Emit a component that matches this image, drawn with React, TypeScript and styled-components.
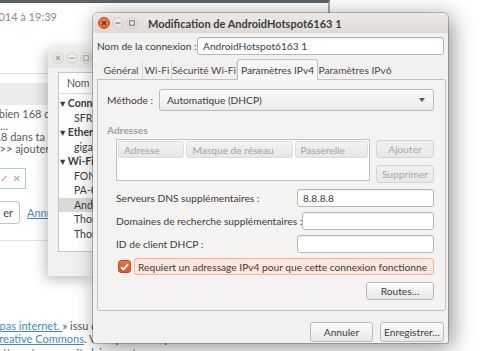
import React from 'react';
import styled, { createGlobalStyle, css } from 'styled-components';

const GlobalStyle = createGlobalStyle`
  html, body {
    margin: 0;
    padding: 0;
  }
  body {
    width: 500px;
    height: 351px;
    overflow: hidden;
    background: #ffffff;
    font-family: Lato, "Open Sans", "DejaVu Sans", sans-serif;
    color: #3c3c3c;
  }
`;

const Desktop = styled.div`
  position: relative;
  width: 500px;
  height: 351px;
  overflow: hidden;
  background: #ffffff;
`;

/* ---------- web page behind the windows ---------- */

const PageColumn = styled.div`
  display: flex;
  flex-direction: column;
  width: 520px;
  margin-left: -8px;
  font-size: 11px;
  color: #555;
`;

const CommentBox = styled.div`
  width: 338px;
  height: 60px;
  border-top: 3px solid #5b6569;
  border-right: 2px solid #a3abae;
  padding: 7px 0 0 0;
  box-sizing: border-box;
  display: flex;
  flex-direction: column;
  gap: 3px;
`;

const Meta = styled.span`
  color: #8a8a8a;
  line-height: 14px;
`;

const Rule = styled.div<{ $top: number; $w: number; $color?: string }>`
  margin-top: ${({ $top }) => $top}px;
  height: 1px;
  width: ${({ $w }) => $w}px;
  background: ${({ $color }) => $color || '#dddddd'};
`;

const Band = styled.div`
  margin-top: 9px;
  height: 22px;
  width: 70px;
  background: #ececec;
`;

const Lines = styled.div`
  margin-top: 3px;
  display: flex;
  flex-direction: column;
  line-height: 11.7px;
  color: #5a5a5a;
`;

const EditBox = styled.div`
  margin-top: 13px;
  width: 34px;
  height: 21px;
  box-sizing: border-box;
  border: 1px solid #a8d0e2;
  display: flex;
  align-items: center;
  justify-content: flex-end;
  gap: 4px;
  padding-right: 4px;
  color: #a5a5a5;
  font-size: 10px;
`;

const ActionRow = styled.div`
  margin-top: 12px;
  display: flex;
  align-items: center;
  gap: 7px;
`;

const GhostButton = styled.div`
  width: 28px;
  height: 23px;
  box-sizing: border-box;
  border: 1px solid #c5c5c5;
  border-left: none;
  border-radius: 0 4px 4px 0;
  display: flex;
  align-items: center;
  justify-content: flex-end;
  padding-right: 6px;
  color: #444;
`;

const PageLink = styled.span`
  color: #3d8dc4;
  text-decoration: underline;
`;

const Footnote = styled.div`
  margin-top: 78px;
  display: flex;
  flex-direction: column;
  line-height: 13.5px;
  color: #555;
  white-space: nowrap;
`;

/* ---------- generic window bits ---------- */

const WinButton = styled.div<{ $kind: 'close' | 'plain' }>`
  width: 12px;
  height: 12px;
  border-radius: 50%;
  display: flex;
  align-items: center;
  justify-content: center;
  flex: none;
  box-sizing: border-box;
  ${({ $kind }) =>
    $kind === 'close'
      ? css`
          background: radial-gradient(circle at 50% 35%, #f7916a, #e0531f);
          border: 1px solid #c9461a;
        `
      : css`
          background: radial-gradient(circle at 50% 35%, #f2f0ee, #dcd9d5);
          border: 1px solid #d0ccc7;
        `}
`;

const Glyph = ({ kind, color }: { kind: 'close' | 'min' | 'max'; color: string }) => (
  <svg width="6" height="6" viewBox="0 0 6 6">
    {kind === 'close' && (
      <path d="M1 1 L5 5 M5 1 L1 5" stroke={color} strokeWidth="1.2" />
    )}
    {kind === 'min' && <path d="M0.5 3 H5.5" stroke={color} strokeWidth="1.2" />}
    {kind === 'max' && (
      <rect x="0.7" y="0.7" width="4.6" height="4.6" fill="none" stroke={color} strokeWidth="1" />
    )}
  </svg>
);

/* ---------- connections window (behind, only its left edge shows) ---------- */

const ConnWindow = styled.div`
  position: absolute;
  left: 48px;
  top: 48px;
  width: 46px;
  height: 228px;
  background: #f2f1f0;
  border-radius: 4px 0 0 0;
  box-shadow: -2px 3px 14px rgba(0, 0, 0, 0.28);
  display: flex;
  flex-direction: column;
  overflow: hidden;
`;

const SmallTitle = styled.div`
  height: 20px;
  flex: none;
  display: flex;
  align-items: center;
  gap: 2px;
  padding-left: 4px;
  background: linear-gradient(#efece9, #e3e0dc);
  opacity: 0.75;
`;

const ListBox = styled.div`
  margin: 4px 0 0 10px;
  height: 178px;
  background: #ffffff;
  border: 1px solid #c9c7c4;
  border-right: none;
  display: flex;
  flex-direction: column;
  font-size: 10.5px;
  overflow: hidden;
`;

const ListHead = styled.div`
  height: 20px;
  flex: none;
  padding-left: 8px;
  display: flex;
  align-items: center;
  border-bottom: 1px solid #dedcda;
  color: #555;
  margin-bottom: 2px;
`;

const ListRow = styled.div<{ $group?: boolean; $selected?: boolean }>`
  height: 14.5px;
  flex: none;
  display: flex;
  align-items: center;
  padding-left: ${({ $group }) => ($group ? 1 : 15)}px;
  font-weight: ${({ $group }) => ($group ? 700 : 400)};
  background: ${({ $selected }) => ($selected ? '#dcdad7' : 'transparent')};
  color: #3c3c3c;
  white-space: nowrap;
  overflow: hidden;
`;

/* ---------- main dialog ---------- */

const Dialog = styled.div`
  position: absolute;
  left: 93px;
  top: 13px;
  width: 355px;
  height: 330px;
  background: #f2f1f0;
  border-radius: 5px 5px 2px 2px;
  box-shadow: 0 0 0 1px rgba(0, 0, 0, 0.22), 4px 4px 22px rgba(0, 0, 0, 0.45);
  display: flex;
  flex-direction: column;
  font-size: 10.2px;
`;

const TitleBar = styled.div`
  height: 20px;
  flex: none;
  display: flex;
  align-items: center;
  gap: 2px;
  padding-left: 5px;
  background: linear-gradient(#ece9e5, #dedad5);
  border-radius: 5px 5px 0 0;
`;

const TitleText = styled.span`
  margin-left: 8px;
  font-size: 11px;
  font-weight: 700;
  color: #3c3c3c;
  white-space: nowrap;
`;

const Body = styled.div`
  display: flex;
  flex-direction: column;
  padding: 4px 2px 0 4px;
`;

const Row = styled.div`
  display: flex;
  align-items: center;
`;

const Label = styled.span<{ $w?: number }>`
  width: ${({ $w }) => ($w ? `${$w}px` : 'auto')};
  flex: none;
  white-space: nowrap;
  color: #3c3c3c;
`;

const TextInput = styled.div<{ $w: number; $h?: number }>`
  width: ${({ $w }) => $w}px;
  height: ${({ $h }) => $h || 18}px;
  box-sizing: border-box;
  background: #ffffff;
  border: 1px solid #b9b7b4;
  border-radius: 3px;
  box-shadow: inset 0 1px 1px rgba(0, 0, 0, 0.06);
  display: flex;
  align-items: center;
  padding-left: 5px;
  color: #3c3c3c;
  white-space: nowrap;
`;

const Tabs = styled.div`
  margin: 3px 0 0 3px;
  height: 21px;
  display: flex;
  align-items: flex-end;
`;

const Tab = styled.div<{ $w: number; $active?: boolean; $last?: boolean }>`
  width: ${({ $w }) => $w}px;
  height: 18px;
  box-sizing: border-box;
  display: flex;
  align-items: center;
  justify-content: center;
  white-space: nowrap;
  color: #4a4a4a;
  border-right: ${({ $last }) => ($last ? 'none' : '1px solid #dcdad7')};
  ${({ $active }) =>
    $active &&
    css`
      height: 21px;
      background: #f7f7f6;
      border: 1px solid #c4c2bf;
      border-bottom: none;
      border-radius: 3px 3px 0 0;
      color: #3c3c3c;
      margin-bottom: -1px;
      position: relative;
      z-index: 1;
    `}
`;

const Panel = styled.div`
  height: 232px;
  box-sizing: border-box;
  border: 1px solid #c4c2bf;
  border-radius: 0 3px 3px 3px;
  background: #f4f3f2;
  padding: 9px 11px 0 9px;
  display: flex;
  flex-direction: column;
`;

const Combo = styled.div`
  flex: 1;
  height: 22px;
  box-sizing: border-box;
  border: 1px solid #bdbbb8;
  border-radius: 3px;
  background: linear-gradient(#fbfbfb, #ebebea);
  display: flex;
  align-items: center;
  justify-content: space-between;
  padding: 0 8px 0 7px;
  color: #3c3c3c;
`;

const Arrow = styled.span`
  width: 0;
  height: 0;
  border-left: 3px solid transparent;
  border-right: 3px solid transparent;
  border-top: 4px solid #555;
`;

const GroupTitle = styled.span`
  margin-top: 13px;
  line-height: 12px;
  font-weight: 700;
  color: #a0a0a0;
`;

const Section = styled.div`
  margin-left: 9px;
  display: flex;
  flex-direction: column;
`;

const AddressRow = styled.div`
  margin-top: 3px;
  display: flex;
  gap: 6px;
`;

const Table = styled.div`
  width: 254px;
  height: 42px;
  box-sizing: border-box;
  background: #ffffff;
  border: 1px solid #c4c2bf;
  padding: 1px;
  display: flex;
  align-items: flex-start;
  gap: 2px;
`;

const HeadCell = styled.div<{ $w: number }>`
  width: ${({ $w }) => $w}px;
  height: 17px;
  box-sizing: border-box;
  background: linear-gradient(#f3f3f3, #e6e6e6);
  border: 1px solid #dcdcdc;
  border-radius: 3px;
  display: flex;
  align-items: center;
  padding-left: 5px;
  color: #a3a3a3;
  white-space: nowrap;
  overflow: hidden;
`;

const SideButtons = styled.div`
  display: flex;
  flex-direction: column;
  gap: 7px;
  padding-top: 1px;
`;

const Button = styled.div<{ $w: number; $h?: number; $disabled?: boolean }>`
  width: ${({ $w }) => $w}px;
  height: ${({ $h }) => $h || 18}px;
  box-sizing: border-box;
  border: 1px solid #bcbab7;
  border-radius: 3px;
  background: linear-gradient(#fcfcfc, #e7e7e6);
  display: flex;
  align-items: center;
  justify-content: center;
  white-space: nowrap;
  color: #3c3c3c;
  ${({ $disabled }) =>
    $disabled &&
    css`
      color: #a8a8a8;
      border-color: #d6d4d2;
      background: linear-gradient(#f1f0ef, #e9e8e7);
    `}
`;

const FieldRow = styled.div`
  display: flex;
  align-items: center;
  justify-content: space-between;
  height: 18px;
`;

const Fields = styled.div`
  margin-top: 6px;
  display: flex;
  flex-direction: column;
  gap: 5px;
`;

const CheckRow = styled.div`
  margin-top: 5px;
  display: flex;
  align-items: center;
  gap: 3px;
  padding-left: 2px;
`;

const CheckBox = styled.div`
  width: 13px;
  height: 13px;
  border-radius: 3px;
  background: linear-gradient(#ea7445, #d95a27);
  border: 1px solid #c44d1d;
  box-sizing: border-box;
  display: flex;
  align-items: center;
  justify-content: center;
`;

const CheckLabel = styled.div`
  flex: 1;
  height: 17px;
  box-sizing: border-box;
  background: #fce7dd;
  border: 1px solid #efb79d;
  border-radius: 3px;
  display: flex;
  align-items: center;
  padding-left: 3px;
  color: #3c3c3c;
  white-space: nowrap;
`;

const RoutesRow = styled.div`
  margin-top: 7px;
  display: flex;
  justify-content: flex-end;
`;

const Footer = styled.div`
  margin-top: 11px;
  display: flex;
  justify-content: flex-end;
  gap: 7px;
  padding-right: 2px;
`;

export default function App() {
  return (
    <Desktop>
      <GlobalStyle />

      <PageColumn>
        <CommentBox>
          <Meta>2014 à 19:39</Meta>
          <span>v</span>
        </CommentBox>
        <Rule $top={13} $w={70} />
        <Band />
        <Lines>
          <span>t bien 168 qui</span>
          <span>· ....</span>
          <span>8.8 dans ta co</span>
          <span>s &gt;&gt; ajouter</span>
        </Lines>
        <EditBox>
          <span>✓</span>
          <span>✕</span>
        </EditBox>
        <ActionRow>
          <GhostButton>er</GhostButton>
          <PageLink>Annuler</PageLink>
        </ActionRow>
        <Rule $top={16} $w={70} $color="#dbe7ee" />
        <Footnote>
          <span>
            <PageLink>s pas internet. </PageLink> » issu de CommentCaMarche
          </span>
          <span>
            <PageLink>Creative Commons</PageLink>. Vous pouvez copier
          </span>
          <span>cette note apparaît clairement.</span>
        </Footnote>
      </PageColumn>

      <ConnWindow>
        <SmallTitle>
          <WinButton $kind="plain">
            <Glyph kind="close" color="#8a8682" />
          </WinButton>
          <WinButton $kind="plain">
            <Glyph kind="min" color="#8a8682" />
          </WinButton>
          <WinButton $kind="plain">
            <Glyph kind="max" color="#8a8682" />
          </WinButton>
        </SmallTitle>
        <ListBox>
          <ListHead>Nom</ListHead>
          <ListRow $group>▾ Conne</ListRow>
          <ListRow>SFR</ListRow>
          <ListRow $group>▾ Ether</ListRow>
          <ListRow>gigab</ListRow>
          <ListRow $group>▾ Wi-Fi</ListRow>
          <ListRow>FON</ListRow>
          <ListRow>PA-C</ListRow>
          <ListRow $selected>Andr</ListRow>
          <ListRow>Thom</ListRow>
          <ListRow>Thom</ListRow>
        </ListBox>
      </ConnWindow>

      <Dialog>
        <TitleBar>
          <WinButton $kind="close">
            <Glyph kind="close" color="#5a2410" />
          </WinButton>
          <WinButton $kind="plain">
            <Glyph kind="min" color="#77736f" />
          </WinButton>
          <WinButton $kind="plain">
            <Glyph kind="max" color="#77736f" />
          </WinButton>
          <TitleText>Modification de AndroidHotspot6163 1</TitleText>
        </TitleBar>

        <Body>
          <Row>
            <Label $w={100}>Nom de la connexion :</Label>
            <TextInput $w={247}>AndroidHotspot6163 1</TextInput>
          </Row>

          <Tabs>
            <Tab $w={43}>Général</Tab>
            <Tab $w={29}>Wi-Fi</Tab>
            <Tab $w={65}>Sécurité Wi-Fi</Tab>
            <Tab $w={81} $active>
              Paramètres IPv4
            </Tab>
            <Tab $w={74} $last>
              Paramètres IPv6
            </Tab>
          </Tabs>

          <Panel>
            <Row>
              <Label $w={52}>Méthode :</Label>
              <Combo>
                <span>Automatique (DHCP)</span>
                <Arrow />
              </Combo>
            </Row>

            <GroupTitle>Adresses</GroupTitle>

            <Section>
              <AddressRow>
                <Table>
                  <HeadCell $w={67}>Adresse</HeadCell>
                  <HeadCell $w={107}>Masque de réseau</HeadCell>
                  <HeadCell $w={74}>Passerelle</HeadCell>
                </Table>
                <SideButtons>
                  <Button $w={58} $disabled>
                    Ajouter
                  </Button>
                  <Button $w={58} $disabled>
                    Supprimer
                  </Button>
                </SideButtons>
              </AddressRow>

              <Fields>
                <FieldRow>
                  <Label>Serveurs DNS supplémentaires :</Label>
                  <TextInput $w={137}>8.8.8.8</TextInput>
                </FieldRow>
                <FieldRow>
                  <Label>Domaines de recherche supplémentaires :</Label>
                  <TextInput $w={137} />
                </FieldRow>
                <FieldRow>
                  <Label>ID de client DHCP :</Label>
                  <TextInput $w={137} />
                </FieldRow>
              </Fields>

              <CheckRow>
                <CheckBox>
                  <svg width="9" height="8" viewBox="0 0 9 8">
                    <path d="M1 4.2 L3.5 6.5 L8 1.2" fill="none" stroke="#ffffff" strokeWidth="1.8" />
                  </svg>
                </CheckBox>
                <CheckLabel>Requiert un adressage IPv4 pour que cette connexion fonctionne</CheckLabel>
              </CheckRow>

              <RoutesRow>
                <Button $w={68}>Routes…</Button>
              </RoutesRow>
            </Section>
          </Panel>

          <Footer>
            <Button $w={63} $h={20}>
              Annuler
            </Button>
            <Button $w={64} $h={20}>
              Enregistrer…
            </Button>
          </Footer>
        </Body>
      </Dialog>
    </Desktop>
  );
}
